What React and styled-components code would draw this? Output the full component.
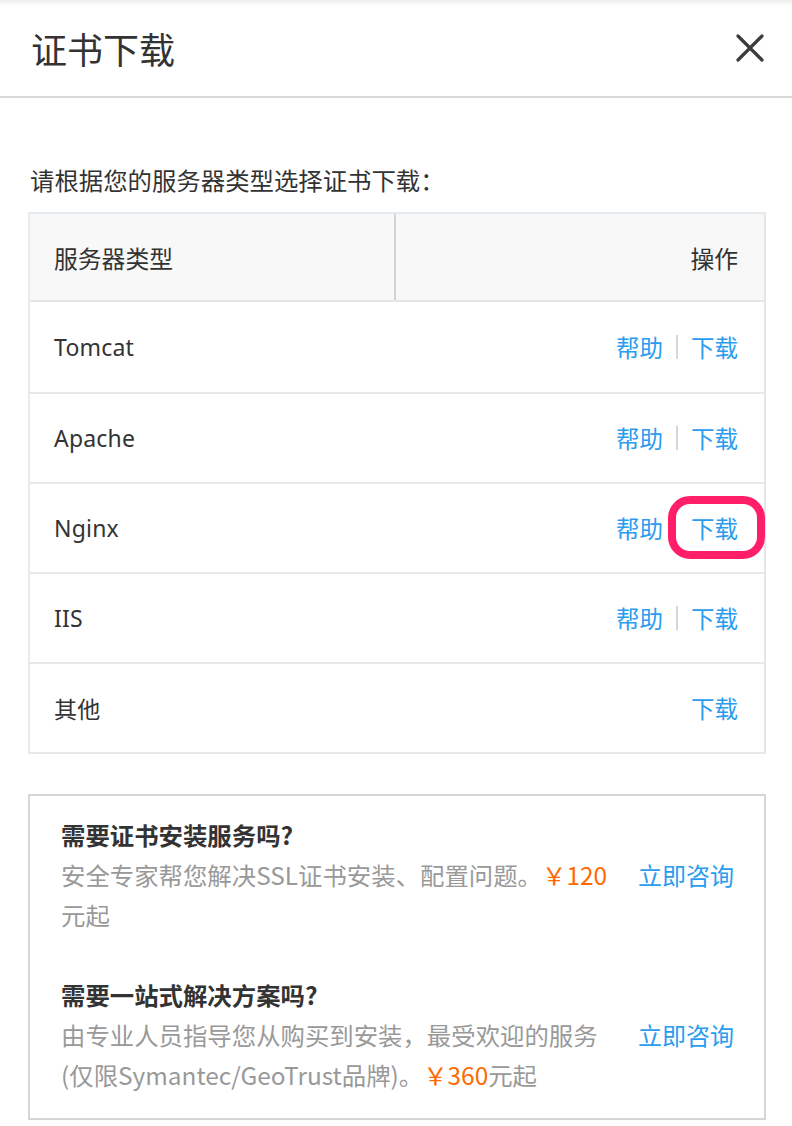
import React from "react";
import styled, { createGlobalStyle } from "styled-components";

const Global = createGlobalStyle`
  html, body { margin: 0; padding: 0; background: #fff; }
  body { font-family: "Noto Sans CJK SC", "Noto Sans", sans-serif; color: #333; }
  * { box-sizing: border-box; }
`;

const Page = styled.div`
  width: 792px;
  min-height: 1126px;
  background: #fff;
  position: relative;
`;

const TopShade = styled.div`
  height: 6px;
  background: linear-gradient(#ececec, #fff);
`;

const Header = styled.header`
  height: 92px;
  display: flex;
  align-items: center;
  justify-content: space-between;
  padding: 0 26px 0 31px;
  border-bottom: 2px solid #d9d9d9;
`;

const Title = styled.h1`
  margin: 0;
  font-size: 36px;
  font-weight: 400;
  color: #333;
  line-height: 1;
  margin-top: -6px;
`;

const CloseBtn = styled.button`
  border: 0;
  background: none;
  padding: 0;
  width: 32px;
  height: 32px;
  display: flex;
  align-items: center;
  justify-content: center;
  margin-top: -6px;
`;

const Body = styled.main`
  padding: 67px 26px 0 28px;
`;

const Intro = styled.p`
  margin: 0 0 17px 2px;
  font-size: 24.4px;
  line-height: 30px;
  color: #333;
`;

const Table = styled.div`
  border-left: 2px solid #ebebeb;
  border-right: 2px solid #e6e6e6;
  border-bottom: 2px solid #e8e8e8;
`;

const HeadRow = styled.div`
  display: grid;
  grid-template-columns: 364px 2px 1fr;
  height: 90px;
  background: #f8f8f8;
  border-top: 2px solid #e4e9ed;
  border-bottom: 2px solid #e6e6e6;
`;

const HeadCell = styled.div`
  display: flex;
  align-items: center;
  justify-content: ${(p) => (p.$right ? "flex-end" : "flex-start")};
  padding: ${(p) => (p.$right ? "0 26px 0 0" : "0 0 0 24px")};
  font-size: 23.8px;
  color: #333;
`;

const ColDivider = styled.div`
  background: #d4d4d4;
`;

const Row = styled.div`
  height: 90px;
  display: flex;
  align-items: center;
  justify-content: space-between;
  padding: 0 26px 0 24px;
  color: #333;
  & + & {
    border-top: 2px solid #e8e8e8;
  }
`;

const Name = styled.span`
  font-family: "Noto Sans", "Noto Sans CJK SC", sans-serif;
  font-size: 23px;
  letter-spacing: 0.2px;
`;

const Actions = styled.div`
  display: flex;
  align-items: center;
  gap: 13px;
`;

const Link = styled.a`
  color: #2a9cf0;
  font-size: 23.5px;
  text-decoration: none;
  position: relative;
`;

const Sep = styled.span`
  width: 2px;
  height: 24px;
  background: ${(p) => (p.$hidden ? "transparent" : "#d6d6d6")};
`;

const Highlight = styled.span`
  position: absolute;
  left: -23px;
  right: -27px;
  top: -15px;
  bottom: -14px;
  border: 8px solid #ff1f68;
  border-radius: 22px;
  pointer-events: none;
`;

const ServiceBox = styled.section`
  margin-top: 40px;
  border: 2px solid #d6d6d6;
  padding: 19px 30px 23px 31px;
`;

const Block = styled.div`
  display: grid;
  grid-template-columns: 1fr auto;
  column-gap: 20px;
  & + & {
    margin-top: 40px;
  }
`;

const BlockTitle = styled.h3`
  grid-column: 1 / -1;
  margin: 0;
  font-size: 24.4px;
  font-weight: 700;
  line-height: 40px;
  color: #333;
`;

const Desc = styled.p`
  margin: 0;
  font-size: 24.4px;
  line-height: 40px;
  color: #999;
  white-space: nowrap;
`;

const Price = styled.span`
  color: #ff6a00;
`;

const Consult = styled.a`
  color: #2a9cf0;
  font-size: 24px;
  line-height: 40px;
  text-decoration: none;
  white-space: nowrap;
`;

const servers = [
  { name: "Tomcat", help: true },
  { name: "Apache", help: true },
  { name: "Nginx", help: true, mark: true },
  { name: "IIS", help: true },
  { name: "其他", help: false },
];

export default function App() {
  return (
    <Page>
      <Global />
      <TopShade />
      <Header>
        <Title>证书下载</Title>
        <CloseBtn aria-label="关闭">
          <svg width="30" height="30" viewBox="0 0 30 30">
            <path d="M3 3 L27 27 M27 3 L3 27" stroke="#3a3d40" strokeWidth="3.2" strokeLinecap="round" />
          </svg>
        </CloseBtn>
      </Header>
      <Body>
        <Intro>请根据您的服务器类型选择证书下载：</Intro>
        <Table>
          <HeadRow>
            <HeadCell>服务器类型</HeadCell>
            <ColDivider />
            <HeadCell $right>操作</HeadCell>
          </HeadRow>
          {servers.map((s) => (
            <Row key={s.name}>
              <Name>{s.name}</Name>
              <Actions>
                {s.help && (
                  <>
                    <Link href="#">帮助</Link>
                    <Sep $hidden={s.mark} />
                  </>
                )}
                <Link href="#">
                  下载
                  {s.mark && <Highlight />}
                </Link>
              </Actions>
            </Row>
          ))}
        </Table>
        <ServiceBox>
          <Block>
            <BlockTitle>需要证书安装服务吗?</BlockTitle>
            <Desc>
              安全专家帮您解决SSL证书安装、配置问题。<Price>￥120</Price>
              <br />
              元起
            </Desc>
            <Consult href="#">立即咨询</Consult>
          </Block>
          <Block>
            <BlockTitle>需要一站式解决方案吗?</BlockTitle>
            <Desc>
              由专业人员指导您从购买到安装，最受欢迎的服务
              <br />
              (仅限Symantec/GeoTrust品牌)。<Price>￥360</Price>元起
            </Desc>
            <Consult href="#">立即咨询</Consult>
          </Block>
        </ServiceBox>
      </Body>
    </Page>
  );
}
